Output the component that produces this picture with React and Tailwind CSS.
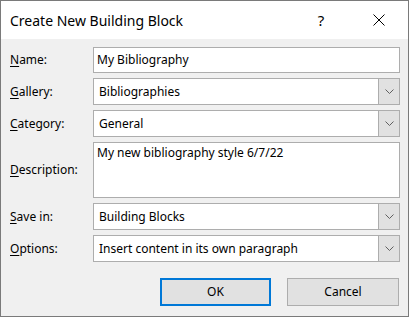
import React from 'react';

const Chevron = () => (
  <svg width="9" height="5" viewBox="0 0 9 5" className="block">
    <path d="M0.5 0.5 L4.5 4.5 L8.5 0.5" fill="none" stroke="#606060" strokeWidth="1" />
  </svg>
);

const Label = ({ k, rest }) => (
  <div className="w-[83px] shrink-0 text-[12px] text-black">
    <span className="underline underline-offset-[2px]">{k}</span>
    {rest}
  </div>
);

const Select = ({ value }) => (
  <div className="flex-1 h-[27px] flex border border-[#adadad] bg-white">
    <div className="flex-1 flex items-center pl-[5px] text-[12px] text-black">{value}</div>
    <div className="w-[21px] flex items-center justify-center bg-[#e1e1e1] border-l border-[#adadad]">
      <Chevron />
    </div>
  </div>
);

const App = () => {
  const rows = [
    { k: 'G', rest: 'allery:', value: 'Bibliographies' },
    { k: 'C', rest: 'ategory:', value: 'General' },
  ];
  const rows2 = [
    { k: 'S', rest: 'ave in:', value: 'Building Blocks' },
    { k: 'O', rest: 'ptions:', value: 'Insert content in its own paragraph' },
  ];

  return (
    <div
      className="w-[409px] h-[317px] flex flex-col border border-[#7a7a7a] bg-[#f0f0f0]"
      style={{ fontFamily: '"Noto Sans", "Open Sans", sans-serif' }}
    >
      {/* title bar */}
      <div className="h-[38px] shrink-0 bg-white flex items-center pl-[9px]">
        <div className="flex-1 text-[14px] text-black">Create New Building Block</div>
        <div className="w-[58px] text-center text-[15px] text-black">?</div>
        <div className="w-[58px] flex items-center justify-center">
          <svg width="12" height="12" viewBox="0 0 12 12">
            <path d="M0.5 0.5 L11.5 11.5 M11.5 0.5 L0.5 11.5" stroke="#000" strokeWidth="1" />
          </svg>
        </div>
      </div>

      {/* form */}
      <div className="flex flex-col gap-[5px] pt-[8px] pl-[9px] pr-[8px]">
        <div className="flex items-center">
          <Label k="N" rest="ame:" />
          <div className="flex-1 h-[26px] flex items-center pl-[3px] border border-[#adadad] bg-white text-[12px] text-black">
            My Bibliography
          </div>
        </div>
        {rows.map((r, i) => (
          <div key={i} className="flex items-center">
            <Label k={r.k} rest={r.rest} />
            <Select value={r.value} />
          </div>
        ))}
        <div className="flex items-center">
          <Label k="D" rest="escription:" />
          <div className="flex-1 h-[56px] pl-[3px] pt-[1px] border border-[#adadad] bg-white text-[12px] text-black">
            My new bibliography style 6/7/22
          </div>
        </div>
        {rows2.map((r, i) => (
          <div key={i} className="flex items-center">
            <Label k={r.k} rest={r.rest} />
            <Select value={r.value} />
          </div>
        ))}
      </div>

      {/* buttons */}
      <div className="flex justify-end gap-[16px] pt-[16px] pr-[9px]">
        <button className="w-[111px] h-[28px] border-2 border-[#0078d7] bg-[#e1e1e1] text-[12px] text-black">
          OK
        </button>
        <button className="w-[112px] h-[28px] border border-[#adadad] bg-[#e1e1e1] text-[12px] text-black">
          Cancel
        </button>
      </div>
    </div>
  );
};

export default App;
